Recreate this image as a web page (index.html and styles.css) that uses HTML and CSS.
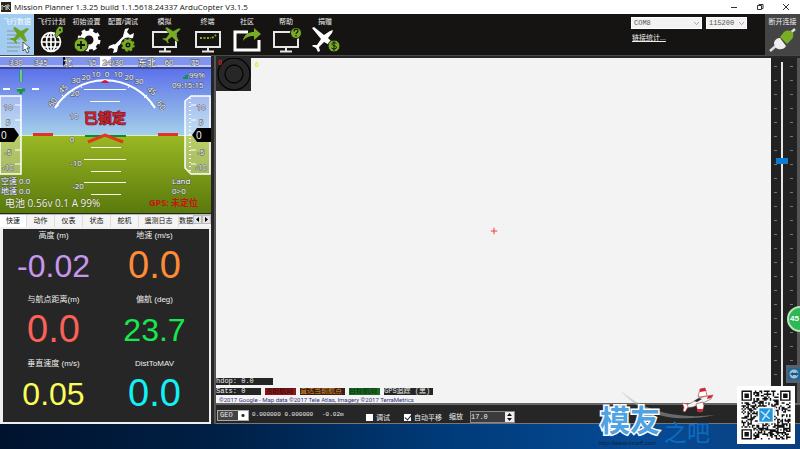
FILE: index.html
```html
<!DOCTYPE html>
<html lang="zh-CN">
<head>
<meta charset="utf-8">
<title>Mission Planner</title>
<link rel="stylesheet" href="styles.css">
</head>
<body>
<header class="titlebar">
  <svg class="app-logo" viewBox="0 0 10 10"><rect width="10" height="10" fill="#26281f"/><path d="M1 8V3l2 2 2-2v5M6 8V3h2v2H6l3 3" stroke="#c3c8b4" fill="none"/></svg>
  <h1 class="title">Mission Planner 1.3.25 build 1.1.5618.24337 ArduCopter V3.1.5</h1>
  <div class="window-buttons">
    <button aria-label="最小化"><svg viewBox="0 0 8 8"><path d="M1 4.500h6"/></svg></button>
    <button aria-label="还原"><svg viewBox="0 0 8 8"><path d="M1.500 2.500h4v4h-4zM3 2.500v-1h4v4H5.500"/></svg></button>
    <button aria-label="关闭"><svg viewBox="0 0 8 8"><path d="M1 1l6 6M7 1L1 7"/></svg></button>
  </div>
</header>

<nav class="toolbar">
  <div class="tools">
    <button class="tool active">飞行数据
      <svg viewBox="0 0 34 29"><path d="M7 5h10M7 9h12M7 13h13M7 17h13M7 21h13M7 25h11" stroke="#8ea9bd" stroke-width="1.500"/><path d="M13 2l2-1 6 4 6-3 2 1-5 5 3 7-2 1-5-5-4 3 1 3-1 1-2-3-4-2 1-1h3l3-4z" fill="#69a01f"/><path d="M23 16v9l2-2 2 4 2-1-2-4h3z" fill="#fff" stroke="#222" stroke-width=".7"/></svg></button>
    <button class="tool">飞行计划
      <svg viewBox="0 0 34 29"><g fill="none" stroke="#fff" stroke-width="1.700"><circle cx="16" cy="16" r="9.500"/><ellipse cx="16" cy="16" rx="4.500" ry="9.500"/><path d="M16 6v20M7 16h19M8 11h16M8 21h16"/></g><path d="M20 10l1-6 3-4 4 1v5l-3 2-4 4z" fill="#78ad25" stroke="#161412" stroke-width=".6"/><circle cx="25" cy="4" r="1" fill="#161412"/></svg></button>
    <button class="tool">初始设置
      <svg viewBox="0 0 34 29"><circle cx="19" cy="14" r="7" fill="none" stroke="#fff" stroke-width="5"/><circle cx="19" cy="14" r="10" fill="none" stroke="#fff" stroke-width="3" stroke-dasharray="4 3.850"/><circle cx="11" cy="19" r="7" fill="#78ad25" stroke="#161412"/><path d="M11 15v8M7 19h8" stroke="#161412" stroke-width="1.800"/></svg></button>
    <button class="tool">配置/调试
      <svg viewBox="0 0 34 29"><path d="M8 22l8-8 5-5" stroke="#fff" stroke-width="3.500"/><path d="M19 3l4-1-2 4 3 3 4-2-1 5-5 2-5-4zM3 20l5-2 4 3-1 5-4 1 1-4-3-1-3 1z" fill="#fff"/><circle cx="22" cy="19" r="7.500" fill="#161412"/><circle cx="22" cy="19" r="4" fill="none" stroke="#78ad25" stroke-width="3"/><circle cx="22" cy="19" r="6" fill="none" stroke="#78ad25" stroke-width="1.500" stroke-dasharray="2.500 2.200"/><circle cx="22" cy="19" r="1" fill="#78ad25"/></svg></button>
    <button class="tool">模拟
      <svg viewBox="0 0 34 29"><path d="M5 6h23v15H5zM17 21v4M11 25.500h12" fill="none" stroke="#e6e6e6" stroke-width="2"/><path d="M17 2l2-1 6 4 6-3 2 1-5 5 3 7-2 1-5-5-4 3 1 3-1 1-2-3-4-2 1-1h3l3-4z" fill="#78ad25" stroke="#161412" stroke-width=".5"/></svg></button>
    <button class="tool">终端
      <svg viewBox="0 0 34 29"><path d="M5 6h24v15H5zM17 21v4M11 25.500h12" fill="none" stroke="#e6e6e6" stroke-width="2"/><path d="M9 12h11M21 12l4-3" stroke="#78ad25" stroke-width="2" stroke-dasharray="2 1.500"/></svg></button>
    <button class="tool">社区
      <svg viewBox="0 0 34 29"><path d="M18 6H5v18h24V14" fill="none" stroke="#fff" stroke-width="3"/><path d="M13 15c1-7 6-9 11-9V2l7 6-7 6v-4c-5 0-8 1-11 5z" fill="#78ad25"/></svg></button>
    <button class="tool">帮助
      <svg viewBox="0 0 34 29"><path d="M5 6h24v15H5zM17 21v4M11 25.500h12" fill="none" stroke="#e6e6e6" stroke-width="2"/><circle cx="27" cy="7" r="5.500" fill="#78ad25" stroke="#161412"/><path d="M25 5.500c0-3 4-3 4-.5 0 1.500-2 1.500-2 3M27 9v1.500" fill="none" stroke="#161412" stroke-width="1.200"/></svg></button>
    <button class="tool">捐赠
      <svg viewBox="0 0 34 29"><path d="M4 2l2-1 10 8 6-4 3-1-1 3-4 5 7 7-2 2-9-5-5 5 1 4-2 1-2-4-4-2 1-1h4l4-6z" fill="#fff"/><circle cx="26" cy="20" r="6" fill="#78ad25" stroke="#161412"/><path d="M28.500 17.500c-2-1.500-5-1-4.500.8.500 2 4.500 1 4.500 3s-3 2.200-5 .7M26 15v10" fill="none" stroke="#161412"/></svg></button>
  </div>
  <div class="link-settings">
    <div class="selects">
      <select class="port" aria-label="端口"><option>COM8</option></select>
      <select class="baud" aria-label="波特率"><option>115200</option></select>
    </div>
    <a href="#stats">链接统计...</a>
  </div>
  <button class="tool connect">断开连接
    <svg viewBox="0 0 34 29"><path d="M4 25l8-7M22 9l7-6" stroke="#ddd" stroke-width="2.500"/><path d="M8 18c0-5 4-6 6-6l6 8c-2 4-7 4-10 2z" fill="#eee"/><path d="M14 11l4-5c4-3 8-1 9 1 1 4-1 6-2 7l-4 4z" fill="#78ad25"/></svg></button>
</nav>

<main class="workspace">
  <section class="left">
    <svg class="hud" viewBox="0 55 211 157" role="img" aria-label="姿态仪">
      <defs>
        <linearGradient id="sky" x2="0" y2="1"><stop stop-color="#4e5fea"/><stop offset="1" stop-color="#a5d1ea"/></linearGradient>
        <linearGradient id="ground" x2="0" y2="1"><stop stop-color="#9bb824"/><stop offset="1" stop-color="#59790c"/></linearGradient>
      </defs>
      <rect y="55" width="211" height="80" fill="url(#sky)"/>
      <rect y="134" width="211" height="78" fill="url(#ground)"/>
      <path d="M0 134.500h211" stroke="#dfeebb"/>
      <rect y="55" width="211" height="11" fill="#8295ee"/>
      <path d="M0 55.500h211M0 65h211" stroke="#fff"/>
      <path d="M0 67h211" stroke="#1e1c37"/>
      <path d="M12 62v3M41 62v3M92 62v3M119 62v3M169 62v3M195 62v3" stroke="#fff"/>
      <rect x="100" y="55" width="11" height="11" fill="#fff"/>
      <path d="M64 56v9" stroke="#111" stroke-width="2"/>
      <g class="hud-text" text-anchor="middle">
        <text x="16" y="64">330</text><text x="41" y="64">345</text><text x="68" y="65" class="mid">北</text><text x="92" y="64">15</text><text x="113" y="64">24/30</text><text x="147" y="65" class="mid">东北</text><text x="169" y="64">60</text><text x="195" y="64">75</text>
        <text x="107" y="76">0</text><text x="96" y="76">10</text><text x="118" y="76">10</text><text x="86" y="79">20</text><text x="129" y="79">20</text><text x="76" y="82">30</text><text x="139" y="83">30</text>
        <text transform="translate(65 90) rotate(-40)">45</text><text transform="translate(150 92) rotate(40)">45</text><text transform="translate(55 103) rotate(-55)">60</text><text transform="translate(159 106) rotate(55)">60</text>
        <text x="75" y="95">20</text><text x="74" y="118">10</text><text x="72" y="141">0</text><text x="76" y="165">-10</text><text x="78" y="188">-20</text>
      </g>
      <path d="M55 107A59 59 0 0 1 155 107" fill="none" stroke="#fff" stroke-width="2"/>
      <path d="M55 107l4-3M155 107l-4-4M62 94l3 3M147 94l-3 3M80 84l2 3M130 84l-2 3" stroke="#fff"/>
      <path d="M101 82q4-6 8 0z" fill="#e0122c"/>
      <path d="M84 88.500h42M90 100.500h30M91 146.500h30M84 158.500h42M91 170.500h30M84 181.500h42M91 193.500h30" stroke="#f3ffdf"/>
      <path d="M85 135h41" stroke="#12892c" stroke-width="2"/>
      <path d="M33 133.500h20M158 133.500h20" stroke="#e13329" stroke-width="3"/>
      <path d="M88 141l17-7 18 7" fill="none" stroke="#df3a18" stroke-width="3"/>
      <path d="M3 88h7M17 88h5M32 88h7" stroke="#fff" stroke-width="2"/>
      <path d="M21 69v12M21 89v4M17 89h8" stroke="#19923c" stroke-width="3"/>
      <path d="M21 69v12" stroke="#c6ffd5"/>
      <path d="M0 95h21v78H0zM191 95l-6 5v67l6 6h19V95z" fill="#fff" fill-opacity=".32" stroke="#fff" stroke-width="1.500"/>
      <path d="M190 97v73" stroke="#fff" stroke-dasharray="1 3" stroke-width="2"/>
      <path d="M15 104h6M15 119h6M15 149h6M15 163h6M191 104h5M191 119h5M191 149h5M191 163h5" stroke="#fff"/>
      <path d="M0 127h14l5 7-5 7H0zM211 127h-14l-5 7 5 7h14z" fill="#000"/>
      <g class="hud-text" text-anchor="middle"><text x="8" y="109">10</text><text x="8" y="124">5</text><text x="8" y="154">-5</text><text x="8" y="169">-10</text><text x="201" y="109">10</text><text x="201" y="124">5</text><text x="201" y="154">-5</text><text x="201" y="169">-10</text></g>
      <g class="hud-value"><text x="1" y="138">0</text><text x="196" y="138">0</text></g>
      <path d="M183 78v-2h2v-2h3v4z" fill="#159347"/>
      <g class="hud-text"><text x="189" y="77">99%</text><text x="172" y="87">09:15:15</text>
        <text x="1" y="183">空速 0.0</text><text x="1" y="193">地速 0.0</text>
        <text x="172" y="183">Land</text><text x="172" y="193">0&gt;0</text></g>
      <text x="5" y="206" class="battery">电池 0.56v 0.1 A 99%</text>
      <text x="105" y="122" class="locked" text-anchor="middle">已锁定</text>
      <text x="149" y="205" class="gps">GPS: 未定位</text>
    </svg>
    <div class="tabs" role="tablist">
      <button role="tab" class="tab selected">快速</button><button role="tab" class="tab">动作</button><button role="tab" class="tab">仪表</button><button role="tab" class="tab">状态</button><button role="tab" class="tab">舵机</button><button role="tab" class="tab wide">遥测日志</button><button role="tab" class="tab cut">数据</button>
      <button class="arrow" aria-label="向左"><svg viewBox="0 0 7 7"><path d="M5 1v5L2 3.500z"/></svg></button><button class="arrow" aria-label="向右"><svg viewBox="0 0 7 7"><path d="M2 1v5l3-2.500z"/></svg></button>
    </div>
    <div class="quick">
      <div class="cell violet"><h2>高度 (m)</h2><p>-0.02</p></div>
      <div class="cell orange large"><h2>地速 (m/s)</h2><p>0.0</p></div>
      <div class="cell red large"><h2>与航点距离(m)</h2><p>0.0</p></div>
      <div class="cell green"><h2>偏航 (deg)</h2><p>23.7</p></div>
      <div class="cell yellow"><h2>垂直速度 (m/s)</h2><p>0.05</p></div>
      <div class="cell cyan large"><h2>DistToMAV</h2><p>0.0</p></div>
    </div>
  </section>

  <section class="right">
    <div class="map-row">
      <div class="map">
        <svg class="compass" viewBox="0 0 35 33"><rect width="35" height="33" fill="#272727"/><g fill="none" stroke="#050505" stroke-width="1.300"><circle cx="18" cy="16" r="16"/><circle cx="18" cy="16" r="9"/></g></svg>
        <span class="mark heading">0</span><span class="mark speed">6</span>
        <svg class="cross" viewBox="0 0 7 7"><path d="M3.500 0v7M0 3.500h7" stroke="#ee4034"/></svg>
        <div class="map-info">
          <span class="chip hdop">hdop: 0.0</span>
          <div class="legend"><span class="chip sats">Sats: 0</span><span class="chip c-red">当前航向</span><span class="chip c-orange">直达当前航点</span><span class="chip c-green">目标航向</span><span class="chip c-black">GPS追踪 (黑)</span></div>
          <small>©2017 Google - Map data ©2017 Tele Atlas, Imagery ©2017 TerraMetrics</small>
        </div>
      </div>
      <div class="zoom-bar"><input type="range" min="0" max="100" value="29" aria-label="地图缩放"></div>
    </div>
    <div class="status">
      <select class="geo" aria-label="坐标格式"><option>GEO</option></select>
      <span class="mono coords">0.000000 0.000000</span>
      <span class="mono alt">-0.02m</span>
      <label class="check"><input type="checkbox">调试</label>
      <label class="check"><input type="checkbox" checked>自动平移</label>
      <label class="zoom">缩放 <span class="spin"><input type="text" value="17.0"><svg class="spinner" viewBox="0 0 9 10"><path d="M2 4l2.500-3L7 4zM2 6l2.500 3L7 6z"/></svg></span></label>
    </div>
  </section>
</main>
<footer class="desktop"></footer>

<div class="bubble">45</div>
<svg class="side-icon" viewBox="0 0 14 18"><rect width="14" height="18" fill="#536270"/><rect x="2" y="3" width="12" height="12" rx="2" fill="#1f6796"/><circle cx="8" cy="9" r="4.500" fill="#a5bfd0"/><path d="M4 9l3-2v1h3V7l3 2-3 2v-1H7v1z" fill="#1f5379"/></svg>
<div class="watermark">
  <svg class="swoosh" viewBox="0 0 120 42"><path d="M4 4C30 26 64 32 98 28 60 36 26 30 4 4z" fill="#aab0b6" opacity=".5"/><g transform="translate(65 1)"><path d="M1 18l8-3 8-5 8-2 6-1-2 4-8 4-10 4-8 1z" fill="#f4f2f2" stroke="#6a3a3c" stroke-width=".5"/><path d="M16 9l2-8 5-1 1 3 1 5zM14 16l7-2 1 4-2 6h-4z" fill="#fff" stroke="#a8282e" stroke-width=".6"/><path d="M18 1l5-1 1 3-6 1zM15 21h6l-1 3h-4zM26 8l5-1-2 3-4 1z" fill="#d4222d"/><path d="M0 15l5 1 1 3-3 5-2-1 1-4z" fill="#fff" stroke="#c72931" stroke-width=".6"/><path d="M12 13l5-3 3 1-5 3z" fill="#292b33"/></g></svg>
  <div class="brand"><b>模友</b><span>之吧</span></div>
  <div class="url">http://www.moz8.com</div>
</div>
<svg class="qr" id="qr" viewBox="-3 -3 39 39" role="img" aria-label="二维码"></svg>
<script src="qr.js"></script>
</body>
</html>
```

FILE: styles.css
```css
* { box-sizing: border-box; }
body {
  margin: 0;
  height: 100vh;
  overflow: hidden;
  display: flex;
  flex-direction: column;
  position: relative;
  background: #161412;
  color: #eee;
  font: 8px/10px "Liberation Sans", "Noto Sans CJK SC", sans-serif;
}
button, select, input { font: inherit; color: inherit; margin: 0; padding: 0; border: 0; border-radius: 0; background: none; }
h1, h2, p { margin: 0; font-weight: normal; }

.titlebar { flex: 0 0 14px; display: flex; align-items: center; background: #fff; color: #111; padding-left: 1px; }
.app-logo { width: 10px; height: 10px; }
.title { margin-left: 3px; font: 8px/14px "Open Sans", sans-serif; white-space: nowrap; }
.window-buttons { margin-left: auto; display: flex; gap: 18px; padding-right: 10px; }
.window-buttons button, .window-buttons svg { display: block; width: 8px; height: 8px; }
.window-buttons path { fill: none; stroke: #333; stroke-width: 1; }

.toolbar { flex: 0 0 41px; display: flex; background: #161412; border-bottom: 1px solid #4a4a4a; }
.tools { display: grid; grid-template-columns: 34px 35px 35px 38px 45px 41px 38px 40px 38px; }
.tool { display: flex; flex-direction: column; align-items: center; padding-top: 3px; font-size: 7px; line-height: 9px; white-space: nowrap; }
.tool svg { width: 34px; height: 29px; }
.tool.active { background: #a2cdf0; color: #f5fbff; }
.link-settings { margin-left: auto; width: 134px; padding-top: 3px; }
.selects { display: flex; gap: 4px; margin-bottom: 4px; }
.selects select {
  appearance: none;
  height: 12px;
  padding: 0 2px;
  border: 1px solid #fff;
  color: #555;
  font: 7px/9px "Liberation Mono", monospace;
  background-color: #f2f2f2;
  background-image: linear-gradient(45deg, transparent 45%, #aaa 45% 60%, transparent 60%), linear-gradient(-45deg, transparent 45%, #aaa 45% 60%, transparent 60%);
  background-size: 3px 3px;
  background-repeat: no-repeat;
  background-position: right 4px center, right 2px center;
}
.selects .port { width: 71px; }
.selects .baud { width: 41px; }
.link-settings a { color: #eee; margin-left: 1px; font-size: 7px; }
.connect { width: 35px; background: #444; }

.workspace { flex: 1; min-height: 0; display: flex; background: #262626; }
.left { flex: 0 0 211px; min-width: 0; display: flex; flex-direction: column; }
.hud { display: block; width: 100%; height: 157px; font-family: "Open Sans", "Noto Sans CJK SC", sans-serif; }
.hud-text text { font-size: 8px; fill: #fff; stroke: #4e545c; stroke-width: 1px; paint-order: stroke; }
.hud-text .mid { font-size: 9px; }
.hud-value text { font-size: 10px; fill: #fff; }
.battery { font-size: 10px; fill: #f1f4df; stroke: #56652d; stroke-width: 1px; paint-order: stroke; }
.locked { font-size: 14px; font-weight: bold; fill: #c9202c; stroke: #651520; stroke-width: 1px; paint-order: stroke; }
.gps { font-size: 9px; font-weight: bold; fill: #c8140f; }

.tabs { flex: 0 0 13px; display: flex; background: #f4f4f4; margin-top: 1px; border-top: 1px solid #bbb; }
.tab { flex: 0 0 28px; color: #111; font-size: 7px; line-height: 12px; white-space: nowrap; overflow: hidden; border-right: 1px solid #ddd; }
.tab.selected { flex-basis: 27px; background: #fff; }
.tab.wide { flex-basis: 40px; }
.tab.cut { flex: 1; min-width: 0; border: 0; text-align: left; }
.arrow { flex: 0 0 9px; background: #e5e5e5; border: 1px solid #bbb; margin-bottom: 3px; }
.arrow svg { display: block; width: 7px; height: 7px; }
.quick { flex: 1; display: grid; grid-template-columns: 1fr 1fr; grid-auto-rows: 64px; align-content: start; padding-right: 4px; border: 2px solid #f0f0f0; border-left-width: 3px; background: #262627; text-align: center; }
.cell h2 { font-size: 8px; line-height: 13px; }
.cell p { font-size: 32px; line-height: 48px; }
.cell.large p { font-size: 38px; line-height: 46px; }
.violet p { color: #c896ef; }
.orange p { color: #ff8b37; }
.red p { color: #fa6157; }
.green p { color: #16e94c; }
.yellow p { color: #faff58; }
.cyan p { color: #13f0f5; }

.right { flex: 1; min-width: 0; margin-left: 3px; display: flex; flex-direction: column; border-left: 2px solid #555; }
.map-row { flex: 1; min-height: 0; display: flex; padding-top: 2px; }
.map { flex: 1; position: relative; background: #f3f3f3; }
.compass { display: block; width: 35px; height: 33px; }
.mark { position: absolute; top: 0; font-size: 7px; font-weight: bold; }
.heading { left: 2px; color: #d8201e; }
.speed { left: 39px; top: 2px; color: #f1e91b; }
.cross { position: absolute; width: 7px; height: 7px; left: 50%; top: 50%; transform: translate(-50%, -50%); }
.map-info { position: absolute; left: 0; bottom: 0; display: flex; flex-direction: column; align-items: flex-start; gap: 3px; white-space: nowrap; }
.chip { height: 7px; line-height: 7px; font-size: 7px; overflow: hidden; background: #252525; font-family: "Liberation Mono", "Noto Sans CJK SC", monospace; }
.hdop { width: 57px; }
.legend { display: flex; gap: 4px; }
.sats { width: 45px; }
.c-red { width: 31px; background: #8e1518; color: #261012; }
.c-orange { width: 45px; background: #322415; color: #e5862b; }
.c-green { width: 31px; background: #176a20; color: #0d2c10; }
.c-black { width: 49px; }
.map-info small { font: 6px/7px Roboto, sans-serif; margin: -2px 0 0 3px; color: #30307f; }
.zoom-bar {
  flex: 0 0 29px;
  display: flex;
  justify-content: center;
  padding: 4px 5px 4px 0;
  border-right: 3px solid #555;
  background:
    repeating-linear-gradient(transparent 0 8px, #777 8px 9px, transparent 9px 14px) 3px 0 / 3px 100% no-repeat,
    repeating-linear-gradient(transparent 0 8px, #777 8px 9px, transparent 9px 14px) 19px 0 / 3px 100% no-repeat,
    #222;
}
.zoom-bar input { appearance: none; writing-mode: vertical-lr; width: 12px; height: 100%; background: linear-gradient(#e6e6e6, #e6e6e6) center / 2px 100% no-repeat; }
.zoom-bar input::-webkit-slider-thumb { appearance: none; width: 12px; height: 6px; background: #0e7bd4; }

.status { flex: 0 0 21px; display: flex; align-items: center; border-top: 2px solid #666; border-bottom: 1px solid #777; background: #262627; padding: 2px 0 0 1px; white-space: nowrap; }
.mono { font: 6px/10px "Liberation Mono", monospace; }
.geo { appearance: none; width: 32px; height: 11px; padding-left: 2px; font: 7px/9px "Liberation Mono", monospace; border: 1px solid #aaa; background: radial-gradient(circle, #222 1px, #fff 2px) right / 10px 100% no-repeat, #444; }
.coords { width: 70px; margin-left: 3px; }
.alt { width: 44px; }
.check { display: flex; align-items: center; gap: 3px; font-size: 7px; margin: 5px 14px 0 0; }
.check input { appearance: none; width: 7px; height: 7px; background: #fff; position: relative; }
.check input:checked::after { content: ""; position: absolute; left: 2px; top: 0; width: 3px; height: 5px; border: solid #222; border-width: 0 1px 1px 0; transform: rotate(40deg); }
.check + .zoom { margin-left: -7px; }
.zoom { display: flex; align-items: center; gap: 7px; font-size: 7px; margin-top: 3px; }
.spin { display: flex; width: 45px; height: 12px; border: 1px solid #888; }
.spin input { flex: 1; min-width: 0; background: #3b3b3b; font: 7px/10px "Liberation Mono", monospace; }
.spinner { width: 9px; height: 10px; background: #eee; fill: #111; }

.desktop { flex: 0 0 25px; background: linear-gradient(90deg, #00132e, #002046 28%, #003a78 55%, #064b96 80%, #0a3f7c); }

.bubble { position: absolute; right: -13px; top: 306px; width: 26px; height: 26px; border: 2px solid #b5e7bf; border-radius: 50%; background: #2fb755; color: #fff; line-height: 22px; padding-left: 1px; font-weight: bold; }
.side-icon { position: absolute; right: 0; top: 365px; width: 14px; height: 18px; }
.watermark { position: absolute; right: 83px; bottom: 2px; width: 118px; height: 60px; }
.swoosh { position: absolute; left: 18px; top: 0; width: 120px; height: 42px; }
.brand { position: absolute; left: 1px; bottom: 8px; display: flex; align-items: flex-end; white-space: nowrap; }
.brand b { font-size: 30px; line-height: 36px; color: #4fa3e2; -webkit-text-stroke: 3px #fff; paint-order: stroke fill; }
.brand span { font-size: 23px; line-height: 22px; margin: 0 0 -5px 4px; color: #0f6cc0; }
.url { position: absolute; left: 0; bottom: 0; font: italic 6px/8px "Liberation Sans", sans-serif; color: #141d2c; }
.qr { position: absolute; right: 5px; bottom: 5px; width: 58px; height: 58px; background: #fff; }
```

FILE: qr.js
```js
const size = 33;
const svg = document.getElementById("qr");
const finders = [[0, 0], [size - 7, 0], [0, size - 7]];
let seed = 4711;

function random() {
  seed = (seed * 1103515245 + 12345) % 2147483648;
  return seed / 2147483648;
}

function dark(x, y) {
  for (const [fx, fy] of finders) {
    const ring = Math.max(Math.abs(x - fx - 3), Math.abs(y - fy - 3));
    if (ring <= 4) return ring === 3 || ring <= 1;
  }
  const align = Math.max(Math.abs(x - 26), Math.abs(y - 26));
  if (align <= 2) return align !== 1;
  return random() < 0.52;
}

let d = "";
for (let y = 0; y < size; y++) {
  for (let x = 0; x < size; x++) {
    if (dark(x, y)) d += `M${x} ${y}h1v1h-1z`;
  }
}
svg.innerHTML = `<path d="${d}" fill="#111"/>
  <rect x="11" y="11" width="11" height="11" fill="#fff"/>
  <rect x="12" y="12" width="9" height="9" fill="#2296d8"/>
  <path d="M13 14l6 5M19 13l-5 7" stroke="#bfe4f7"/>`;
```
